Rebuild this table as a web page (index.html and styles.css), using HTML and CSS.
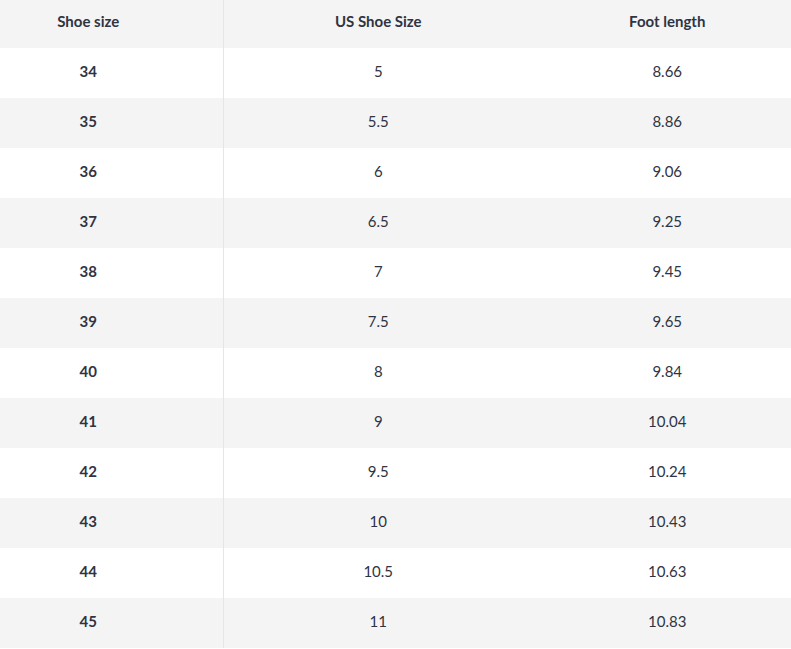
FILE: index.html
```html
<!DOCTYPE html>
<html>
<head>
<meta charset="utf-8">
<link rel="stylesheet" href="styles.css">
</head>
<body>
<table class="size-table">
  <thead>
    <tr><th class="c1">Shoe size</th><th class="c2">US Shoe Size</th><th class="c3">Foot length</th></tr>
  </thead>
  <tbody>
    <tr><td class="c1">34</td><td class="c2">5</td><td class="c3">8.66</td></tr>
    <tr><td class="c1">35</td><td class="c2">5.5</td><td class="c3">8.86</td></tr>
    <tr><td class="c1">36</td><td class="c2">6</td><td class="c3">9.06</td></tr>
    <tr><td class="c1">37</td><td class="c2">6.5</td><td class="c3">9.25</td></tr>
    <tr><td class="c1">38</td><td class="c2">7</td><td class="c3">9.45</td></tr>
    <tr><td class="c1">39</td><td class="c2">7.5</td><td class="c3">9.65</td></tr>
    <tr><td class="c1">40</td><td class="c2">8</td><td class="c3">9.84</td></tr>
    <tr><td class="c1">41</td><td class="c2">9</td><td class="c3">10.04</td></tr>
    <tr><td class="c1">42</td><td class="c2">9.5</td><td class="c3">10.24</td></tr>
    <tr><td class="c1">43</td><td class="c2">10</td><td class="c3">10.43</td></tr>
    <tr><td class="c1">44</td><td class="c2">10.5</td><td class="c3">10.63</td></tr>
    <tr><td class="c1">45</td><td class="c2">11</td><td class="c3">10.83</td></tr>
  </tbody>
</table>
</body>
</html>
```
FILE: styles.css
```css
html, body {
  margin: 0;
  padding: 0;
  background: #ffffff;
}
body {
  font-family: Lato, "Liberation Sans", sans-serif;
  font-size: 15px;
  color: #2f3443;
  overflow: hidden;
}
.size-table {
  border-collapse: collapse;
  width: 791px;
  table-layout: fixed;
}
.size-table th,
.size-table td {
  padding: 0;
  text-align: center;
  vertical-align: middle;
}
.size-table th {
  height: 48px;
  font-weight: 700;
  background: #f4f4f4;
  padding-bottom: 7px;
  box-sizing: border-box;
}
.size-table td {
  height: 50px;
  font-weight: 400;
  padding-bottom: 4px;
  box-sizing: border-box;
}
.size-table tbody tr:nth-child(even) td {
  background: #f4f4f4;
}
.size-table .c1 {
  width: 223px;
  padding-right: 46px;
  border-right: 1px solid #e6e6e6;
}
.size-table td.c1 {
  font-weight: 700;
}
.size-table .c2 {
  width: 310px;
}
.size-table .c3 {
  padding-left: 11px;
}
```
